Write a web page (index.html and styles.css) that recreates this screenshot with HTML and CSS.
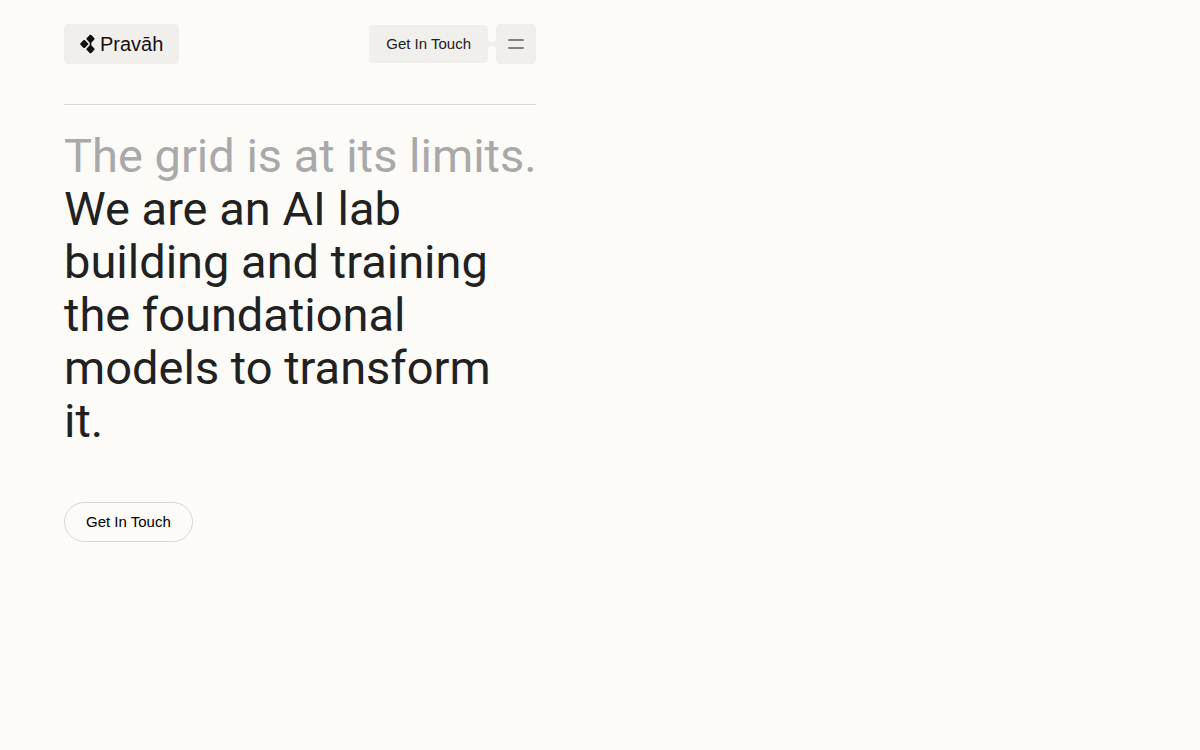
FILE: index.html
```
<!DOCTYPE html>
<html lang="en">
<head>
<meta charset="utf-8">
<meta name="viewport" content="width=device-width, initial-scale=1">
<title>Pravāh</title>
<link rel="stylesheet" href="styles.css">
</head>
<body>
<div class="page">
  <header class="header">
    <a class="logo" href="#" aria-label="Pravāh home">
      <svg class="logo-mark" viewBox="0 0 15 20" aria-hidden="true">
        <path d="M7 5h7L11.300 8.500v3L14 15H7l2.700-3.500v-3z"/>
        <rect x="7.300" y="1.600" width="6.400" height="6.400" rx="1.200" transform="rotate(45 10.500 4.800)"/>
        <rect x="7.300" y="12" width="6.400" height="6.400" rx="1.200" transform="rotate(45 10.500 15.200)"/>
        <rect x="1" y="6.800" width="6.400" height="6.400" rx="1.200" transform="rotate(45 4.200 10)"/>
      </svg>
      <span>Pravāh</span>
    </a>
    <nav class="actions" aria-label="Main">
      <a class="nav-link" href="#contact">Get In Touch</a>
      <svg class="joint" viewBox="0 0 8 8" aria-hidden="true"><path d="M0 0Q4 4 8 0V8Q4 4 0 8Z"/></svg>
      <button class="menu" type="button" aria-label="Open menu">
        <svg class="menu-icon" viewBox="0 0 16 12" aria-hidden="true"><path d="M1 2H15M1 10H15"/></svg>
      </button>
    </nav>
  </header>
  <main class="main">
    <h1 class="headline">
      <span class="line muted">The grid is at its limits.</span>
      <span class="line">We are an AI lab</span>
      <span class="line">building and training</span>
      <span class="line">the foundational</span>
      <span class="line">models to transform</span>
      <span class="line">it.</span>
    </h1>
    <a class="cta" id="contact" href="#contact">Get In Touch</a>
  </main>
</div>
</body>
</html>
```
FILE: styles.css
```
* { box-sizing: border-box; }
body {
  margin: 0;
  background: #fcfbf8;
  color: #212121;
  font-family: "Liberation Sans", Arial, sans-serif;
}
a { color: inherit; text-decoration: none; }
.page { width: 50%; padding: 24px 64px; }
.header {
  display: flex;
  align-items: center;
  justify-content: space-between;
  padding-bottom: 40px;
  border-bottom: 1px solid #d8d7d4;
}
.logo {
  display: flex;
  align-items: center;
  gap: 5px;
  padding: 0 16px;
  line-height: 40px;
  border-radius: 4px;
  background: #f0efec;
  color: #150f14;
  font-size: 20px;
}
.logo-mark { width: 15px; height: 20px; fill: currentColor; }
.actions { display: flex; align-items: center; }
.nav-link {
  padding: 0 17px;
  line-height: 38px;
  border-radius: 4px;
  background: #f0efec;
  font-size: 15px;
}
.joint { width: 8px; height: 8px; fill: #f0efec; }
.menu {
  display: flex;
  align-items: center;
  justify-content: center;
  width: 40px;
  height: 40px;
  padding: 0;
  border: 0;
  border-radius: 4px;
  background: #f0efec;
  color: #808080;
}
.menu-icon { width: 16px; height: 12px; fill: none; stroke: currentColor; stroke-width: 2; stroke-linecap: round; }
.main { padding-top: 24px; }
.headline {
  margin: 0 0 55px;
  font-family: Roboto, "Liberation Sans", sans-serif;
  font-size: 47px;
  line-height: 53px;
  font-weight: 400;
}
.line { display: block; white-space: nowrap; }
.muted { color: #a9a9a9; }
.cta {
  display: inline-block;
  padding: 0 21px;
  line-height: 38px;
  border: 1px solid #d8d7d4;
  border-radius: 20px;
  color: #000;
  font-size: 15px;
}
```
